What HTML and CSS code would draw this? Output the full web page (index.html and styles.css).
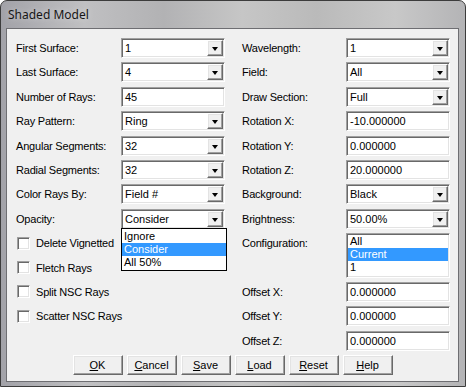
FILE: index.html
```html
<!DOCTYPE html>
<html>
<head>
    <title>Shaded Model</title>
    <link rel="stylesheet" href="styles.css">
</head>
<body>

<div class="window">
	<div class="titlebar">Shaded Model</div>

	<div class="client">
		<div class="form">
			<div class="lbl">First Surface:</div>
			<div class="combo"><span class="val">1</span><span class="drop"></span></div>
			<div class="lbl right">Wavelength:</div>
			<div class="combo"><span class="val">1</span><span class="drop"></span></div>

			<div class="lbl">Last Surface:</div>
			<div class="combo"><span class="val">4</span><span class="drop"></span></div>
			<div class="lbl right">Field:</div>
			<div class="combo"><span class="val">All</span><span class="drop"></span></div>

			<div class="lbl">Number of Rays:</div>
			<div class="edit">45</div>
			<div class="lbl right">Draw Section:</div>
			<div class="combo"><span class="val">Full</span><span class="drop"></span></div>

			<div class="lbl">Ray Pattern:</div>
			<div class="combo"><span class="val">Ring</span><span class="drop"></span></div>
			<div class="lbl right">Rotation X:</div>
			<div class="edit">-10.000000</div>

			<div class="lbl">Angular Segments:</div>
			<div class="combo"><span class="val">32</span><span class="drop"></span></div>
			<div class="lbl right">Rotation Y:</div>
			<div class="edit">0.000000</div>

			<div class="lbl">Radial Segments:</div>
			<div class="combo"><span class="val">32</span><span class="drop"></span></div>
			<div class="lbl right">Rotation Z:</div>
			<div class="edit">20.000000</div>

			<div class="lbl">Color Rays By:</div>
			<div class="combo"><span class="val">Field #</span><span class="drop"></span></div>
			<div class="lbl right">Background:</div>
			<div class="combo"><span class="val">Black</span><span class="drop"></span></div>

			<div class="lbl">Opacity:</div>
			<div class="combo open">
				<span class="val">Consider</span><span class="drop"></span>
				<div class="droplist">
					<div class="item">Ignore</div>
					<div class="item sel">Consider</div>
					<div class="item">All 50%</div>
				</div>
			</div>
			<div class="lbl right">Brightness:</div>
			<div class="combo"><span class="val">50.00%</span><span class="drop"></span></div>

			<div class="check"><span class="box"></span>Delete Vignetted</div>
			<div class="lbl right top">Configuration:</div>
			<div class="listbox">
				<div class="item">All</div>
				<div class="item sel">Current</div>
				<div class="item">1</div>
			</div>

			<div class="check"><span class="box"></span>Fletch Rays</div>
			<div></div>

			<div class="check"><span class="box"></span>Split NSC Rays</div>
			<div class="lbl right">Offset X:</div>
			<div class="edit">0.000000</div>

			<div class="check"><span class="box"></span>Scatter NSC Rays</div>
			<div class="lbl right">Offset Y:</div>
			<div class="edit">0.000000</div>

			<div class="check"></div>
			<div class="lbl right">Offset Z:</div>
			<div class="edit">0.000000</div>
		</div>

		<div class="buttons">
			<a class="btn"><u>O</u>K</a>
			<a class="btn"><u>C</u>ancel</a>
			<a class="btn"><u>S</u>ave</a>
			<a class="btn"><u>L</u>oad</a>
			<a class="btn"><u>R</u>eset</a>
			<a class="btn"><u>H</u>elp</a>
		</div>
	</div>
</div>

</body>
</html>
```

FILE: styles.css
```css
body{
	margin: 0;
	overflow: hidden;
	font-family: "Liberation Sans", Arial, sans-serif;
	font-size: 11px;
	color: #000;
}

.window{
	width: 466px;
	height: 387px;
	box-sizing: border-box;
	border: 1px solid #3c3c3c;
	border-radius: 7px 7px 0 0;
	padding: 0 6px 4px 5px;
	display: flex;
	flex-direction: column;
	background: linear-gradient(to right, #a2a2a8 0%, #c0c0c2 18%, #b2b2b4 35%, #c6c6c6 52%, #bababa 68%, #c8c8c8 85%, #b4b4b6 100%);
}

.titlebar{
	height: 27px;
	line-height: 27px;
	padding-left: 2px;
	font-family: "Noto Sans", "Open Sans", sans-serif;
	font-size: 12px;
	color: #161616;
	text-shadow: 0 0 6px rgba(255,255,255,0.5);
}

.client{
	flex: 1;
	background-color: #f0f0f0;
	border: 1px solid #6e6e72;
	padding: 9px 0 0 9px;
}

.form{
	display: grid;
	grid-template-columns: 105px 104px 121px 104px;
	grid-template-rows: repeat(13, 20px);
	row-gap: 4.4px;
}

.lbl{
	display: flex;
	align-items: center;
	white-space: nowrap;
	letter-spacing: -0.2px;
}

.lbl.right{
	padding-left: 17px;
}

.lbl.top{
	align-items: flex-start;
	padding-top: 4px;
}

/* sunken fields */
.combo, .edit, .listbox{
	position: relative;
	box-sizing: border-box;
	background-color: #fff;
	border: 1px solid;
	border-color: #a0a0a0 #fff #fff #a0a0a0;
	box-shadow: inset 1px 1px 0 #696969, inset -1px -1px 0 #e3e3e3;
}

.combo, .edit{
	height: 20px;
	line-height: 18px;
	padding-left: 3px;
	white-space: nowrap;
}

.drop{
	position: absolute;
	top: 1px;
	right: 1px;
	width: 16px;
	height: 16px;
	box-sizing: border-box;
	background-color: #f0f0f0;
	border: 1px solid;
	border-color: #fff #696969 #696969 #fff;
	box-shadow: inset -1px -1px 0 #a0a0a0, inset 1px 1px 0 #e3e3e3;
}

.drop:after{
	content: "";
	position: absolute;
	left: 4px;
	top: 6px;
	border-left: 3.5px solid transparent;
	border-right: 3.5px solid transparent;
	border-top: 4px solid #000;
}

.droplist{
	position: absolute;
	top: 18px;
	left: -1px;
	width: 106px;
	box-sizing: border-box;
	background-color: #fff;
	border: 1px solid #000;
	padding: 1px 0;
	z-index: 2;
}

.item{
	height: 13px;
	line-height: 13px;
	padding-left: 2px;
}

.item.sel{
	background-color: #3399ff;
	color: #fff;
}

.listbox{
	grid-row: span 2;
	padding: 1px 1px 0 1px;
}

.listbox .item{
	padding-left: 2px;
}

.check{
	grid-column: span 2;
	display: flex;
	align-items: center;
	white-space: nowrap;
	letter-spacing: -0.2px;
}

.check .box{
	width: 13px;
	height: 13px;
	box-sizing: border-box;
	margin: 0 6px 0 1px;
	background-color: #fff;
	border: 1px solid;
	border-color: #a0a0a0 #fff #fff #a0a0a0;
	box-shadow: inset 1px 1px 0 #696969, inset -1px -1px 0 #e3e3e3;
}

.buttons{
	display: flex;
	justify-content: center;
	gap: 4px;
	margin: 4px 0 0 -9px;
}

.btn{
	width: 50px;
	height: 20px;
	box-sizing: border-box;
	line-height: 18px;
	text-align: center;
	background-color: #f0f0f0;
	border: 1px solid;
	border-color: #fff #696969 #696969 #fff;
	box-shadow: inset -1px -1px 0 #a0a0a0, inset 1px 1px 0 #e3e3e3;
}
```
